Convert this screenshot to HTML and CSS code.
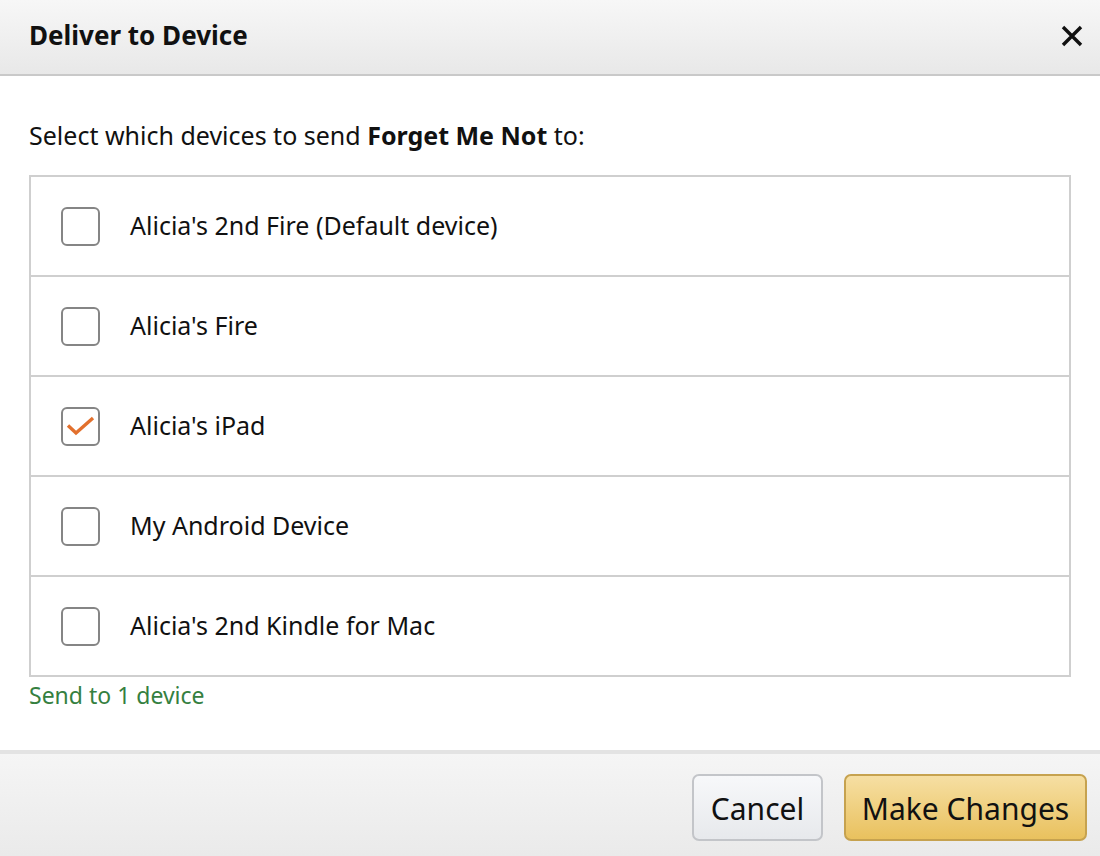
FILE: index.html
```html
<!DOCTYPE html>
<html lang="en">
<head>
<meta charset="utf-8">
<title>Deliver to Device</title>
<link rel="stylesheet" href="styles.css">
</head>
<body>
<div class="modal">
  <header class="modal-header">
    <h1 class="modal-title">Deliver to Device</h1>
    <button class="close-btn" aria-label="Close">
      <svg width="22" height="22" viewBox="0 0 22 22"><path d="M2 2 L20 20 M20 2 L2 20" stroke="#111" stroke-width="3.4" stroke-linecap="butt"/></svg>
    </button>
  </header>
  <main class="modal-body">
    <p class="intro">Select which devices to send <b>Forget Me Not</b> to:</p>
    <ul class="device-list">
      <li class="device-row"><span class="checkbox"></span><span class="device-name">Alicia's 2nd Fire (Default device)</span></li>
      <li class="device-row"><span class="checkbox"></span><span class="device-name">Alicia's Fire</span></li>
      <li class="device-row"><span class="checkbox checked"><svg width="30" height="20" viewBox="0 0 30 20"><path d="M2 9.5 L10 17 L27 2" fill="none" stroke="#e2702d" stroke-width="3.4" stroke-linejoin="miter"/></svg></span><span class="device-name">Alicia's iPad</span></li>
      <li class="device-row"><span class="checkbox"></span><span class="device-name">My Android Device</span></li>
      <li class="device-row"><span class="checkbox"></span><span class="device-name">Alicia's 2nd Kindle for Mac</span></li>
    </ul>
    <p class="status">Send to 1 device</p>
  </main>
  <footer class="modal-footer">
    <button class="btn btn-secondary">Cancel</button>
    <button class="btn btn-primary">Make Changes</button>
  </footer>
</div>
</body>
</html>
```

FILE: styles.css
```css
html, body {
  margin: 0;
  padding: 0;
  background: #fff;
}
body {
  font-family: "Noto Sans", "Open Sans", Arial, sans-serif;
  color: #111;
}
.modal {
  width: 1100px;
  height: 856px;
  display: flex;
  flex-direction: column;
  overflow: hidden;
}
.modal-header {
  height: 76px;
  box-sizing: border-box;
  display: flex;
  align-items: center;
  justify-content: space-between;
  padding: 0 17px 5px 29px;
  background: linear-gradient(#f7f7f7, #e8e8e8);
  border-bottom: 2px solid #c9c9c9;
  flex: none;
}
.modal-title {
  margin: 0;
  font-size: 26px;
  font-weight: 700;
}
.close-btn {
  border: 0;
  background: none;
  padding: 0;
  display: flex;
  cursor: pointer;
  margin-top: 2px;
}
.modal-body {
  flex: 1;
  padding: 0 29px;
  display: flex;
  flex-direction: column;
}
.intro {
  margin: 0;
  height: 99px;
  display: flex;
  align-items: center;
  padding-top: 18px;
  box-sizing: border-box;
  font-size: 25px;
  white-space: pre;
}
.device-list {
  list-style: none;
  margin: 0;
  padding: 0;
  border: 2px solid #cfcfcf;
  border-top: 0;
}
.device-row {
  height: 100px;
  box-sizing: border-box;
  border-top: 2px solid #cfcfcf;
  display: flex;
  align-items: center;
  padding-left: 30px;
}
.checkbox {
  width: 39px;
  height: 39px;
  box-sizing: border-box;
  border: 2px solid #858585;
  border-radius: 6px;
  display: flex;
  align-items: center;
  justify-content: center;
  flex: none;
}
.device-name {
  margin-left: 30px;
  font-size: 25px;
  padding-bottom: 3px;
}
.status {
  margin: 2px 0 0;
  font-size: 23px;
  color: #35803f;
}
.modal-footer {
  flex: none;
  height: 106px;
  box-sizing: border-box;
  border-top: 4px solid #e3e3e3;
  background: linear-gradient(#f5f5f5, #eaeaea);
  display: flex;
  justify-content: flex-end;
  align-items: flex-start;
  gap: 21px;
  padding: 20px 13px 0 0;
}
.btn {
  height: 67px;
  box-sizing: border-box;
  border-radius: 7px;
  font-family: inherit;
  font-size: 30px;
  color: #111;
  padding: 2px 0 0;
  cursor: pointer;
}
.btn-secondary {
  background: linear-gradient(#f7f8fa, #e7e9ec);
  border: 2px solid #c3c5c9;
  width: 131px;
}
.btn-primary {
  background: linear-gradient(#f6dfa3, #e9c15e);
  border: 2px solid #c6a24f;
  width: 243px;
}
```
